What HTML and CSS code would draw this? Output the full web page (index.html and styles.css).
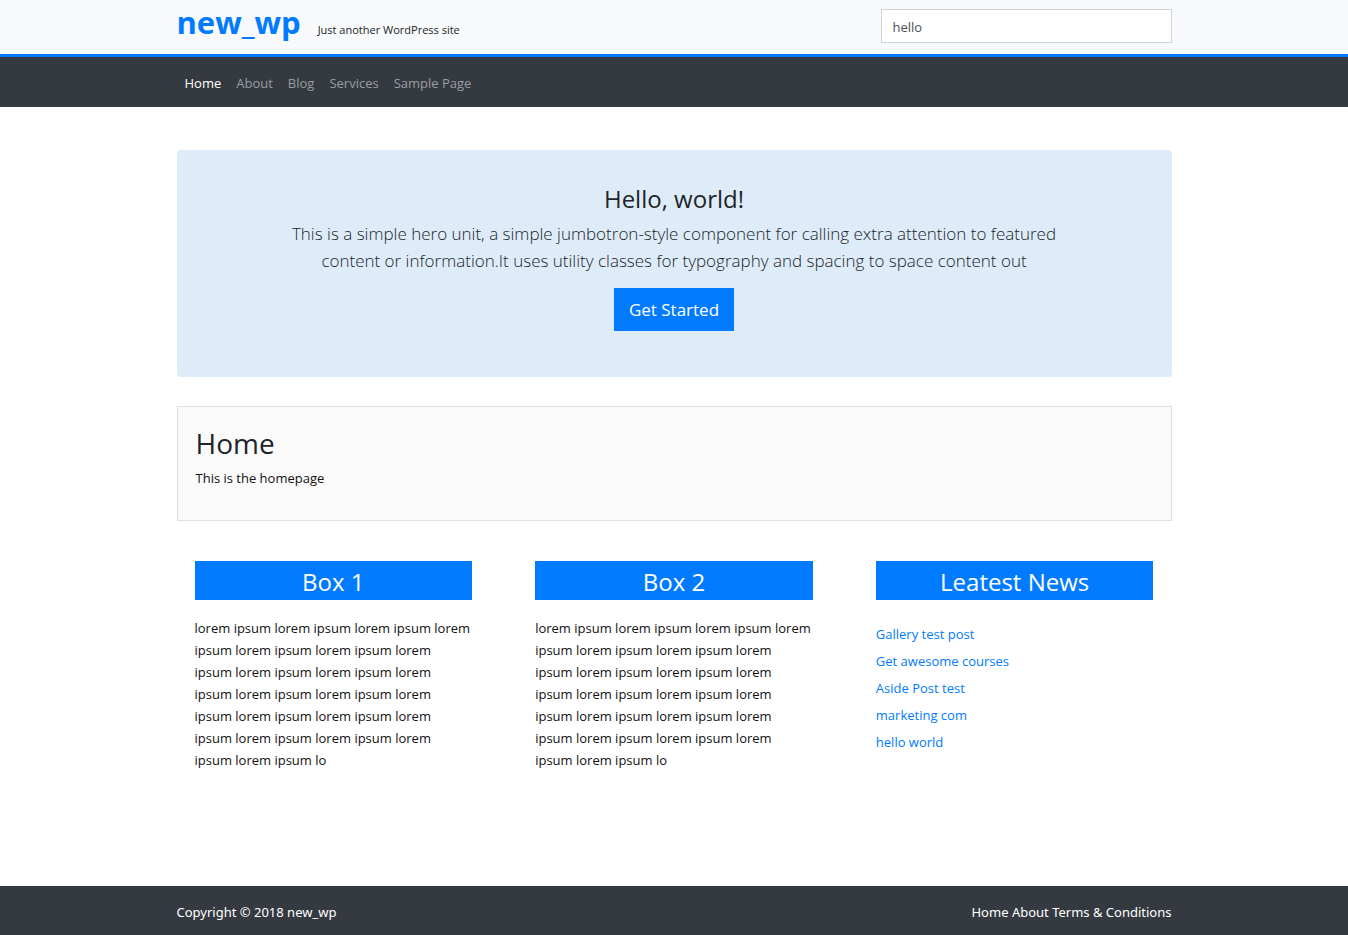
FILE: index.html
```html
<!DOCTYPE html>
<html lang="en">
<head>
<meta charset="utf-8">
<title>new_wp</title>
<link rel="stylesheet" href="styles.css">
</head>
<body>
<header class="site-header">
  <div class="container header-row">
    <div class="branding">
      <a class="brand" href="#">new_wp</a>
      <span class="tagline">Just another WordPress site</span>
    </div>
    <input class="search" type="text" value="hello" aria-label="Search">
  </div>
</header>
<nav class="navbar" aria-label="Main">
  <div class="container nav-row">
    <a class="nav-link active" href="#">Home</a>
    <a class="nav-link" href="#">About</a>
    <a class="nav-link" href="#">Blog</a>
    <a class="nav-link" href="#">Services</a>
    <a class="nav-link" href="#">Sample Page</a>
  </div>
</nav>
<main class="container main">
  <section class="hero">
    <h2 class="hero-title">Hello, world!</h2>
    <p class="hero-text">This is a simple hero unit, a simple jumbotron-style component for calling extra attention to featured<br>content or information.It uses utility classes for typography and spacing to space content out</p>
    <a class="hero-button" href="#">Get Started</a>
  </section>
  <section class="card">
    <h1 class="card-title">Home</h1>
    <p class="card-text">This is the homepage</p>
  </section>
  <div class="boxes">
    <section class="box">
      <h3 class="box-title">Box 1</h3>
      <p class="box-text">lorem ipsum lorem ipsum lorem ipsum lorem<br>ipsum lorem ipsum lorem ipsum lorem<br>ipsum lorem ipsum lorem ipsum lorem<br>ipsum lorem ipsum lorem ipsum lorem<br>ipsum lorem ipsum lorem ipsum lorem<br>ipsum lorem ipsum lorem ipsum lorem<br>ipsum lorem ipsum lo</p>
    </section>
    <section class="box">
      <h3 class="box-title">Box 2</h3>
      <p class="box-text">lorem ipsum lorem ipsum lorem ipsum lorem<br>ipsum lorem ipsum lorem ipsum lorem<br>ipsum lorem ipsum lorem ipsum lorem<br>ipsum lorem ipsum lorem ipsum lorem<br>ipsum lorem ipsum lorem ipsum lorem<br>ipsum lorem ipsum lorem ipsum lorem<br>ipsum lorem ipsum lo</p>
    </section>
    <section class="box">
      <h3 class="box-title">Leatest News</h3>
      <ul class="news">
        <li><a href="#">Gallery test post</a></li>
        <li><a href="#">Get awesome courses</a></li>
        <li><a href="#">Aside Post test</a></li>
        <li><a href="#">marketing com</a></li>
        <li><a href="#">hello world</a></li>
      </ul>
    </section>
  </div>
</main>
<footer class="footer">
  <div class="container footer-row">
    <span>Copyright © 2018 new_wp</span>
    <nav class="footer-links" aria-label="Footer"><a href="#">Home</a> <a href="#">About</a> <a href="#">Terms &amp; Conditions</a></nav>
  </div>
</footer>
</body>
</html>
```

FILE: styles.css
```css
* { box-sizing: border-box; }
body {
  margin: 0;
  min-height: 100vh;
  display: flex;
  flex-direction: column;
  font: 13px/21px "Open Sans", "Noto Sans", sans-serif;
  color: #212529;
  background: #fff;
}
h1, h2, h3, p, ul { margin: 0; padding: 0; }
a { color: #007bff; text-decoration: none; }
.container { width: 100%; max-width: 995px; margin: 0 auto; }
.site-header { background: #f8f9fa; border-bottom: 3px solid #007bff; }
.header-row {
  display: flex;
  align-items: flex-start;
  justify-content: space-between;
  padding-top: 9px;
  padding-bottom: 11px;
}
.branding { display: flex; align-items: baseline; gap: 17px; }
.brand { font-size: 31px; line-height: 26px; font-weight: 700; }
.tagline { font-size: 11px; color: #212529; }
.search {
  width: 291px;
  height: 34px;
  padding: 2px 11px 0;
  border: 1px solid #ced4da;
  font: inherit;
  color: #495057;
  background: #fff;
}
.navbar { background: #343a40; }
.nav-row { display: flex; gap: 15px; padding: 16px 8px 13px; }
.nav-link { color: #9a9da0; }
.nav-link.active { color: #fff; }
.main { flex: 1; padding-top: 43px; }
.hero {
  padding: 32px 16px 46px;
  border-radius: 4px;
  background: #deecf9;
  text-align: center;
}
.hero-title { font-size: 24px; line-height: 34px; font-weight: 400; }
.hero-text { margin: 4px 0 14px; font-size: 17px; line-height: 27px; font-weight: 300; }
.hero-button {
  display: inline-block;
  padding: 8px 15px;
  font-size: 17px;
  line-height: 27px;
  color: #fff;
  background: #007bff;
}
.card {
  margin-top: 29px;
  padding: 17px 18px 31px;
  border: 1px solid #dfdfdf;
  background: #fafafa;
}
.card-title { font-size: 28px; line-height: 38px; font-weight: 400; }
.card-text { margin-top: 6px; color: #111; }
.boxes { display: grid; grid-template-columns: repeat(3, 1fr); gap: 63px; padding: 40px 18px; }
.box-title {
  padding: 6px 0 3px;
  font-size: 24px;
  line-height: 30px;
  font-weight: 400;
  text-align: center;
  color: #fff;
  background: #007bff;
}
.box-text { margin-top: 17px; line-height: 22px; color: #111; white-space: nowrap; }
.news { margin-top: 21px; list-style: none; line-height: 27px; }
.footer { background: #343a40; color: #fff; font-family: "Noto Sans", "Open Sans", sans-serif; }
.footer-row { display: flex; justify-content: space-between; padding: 16px 0 12px; }
.footer-links a { color: #fff; }
```
